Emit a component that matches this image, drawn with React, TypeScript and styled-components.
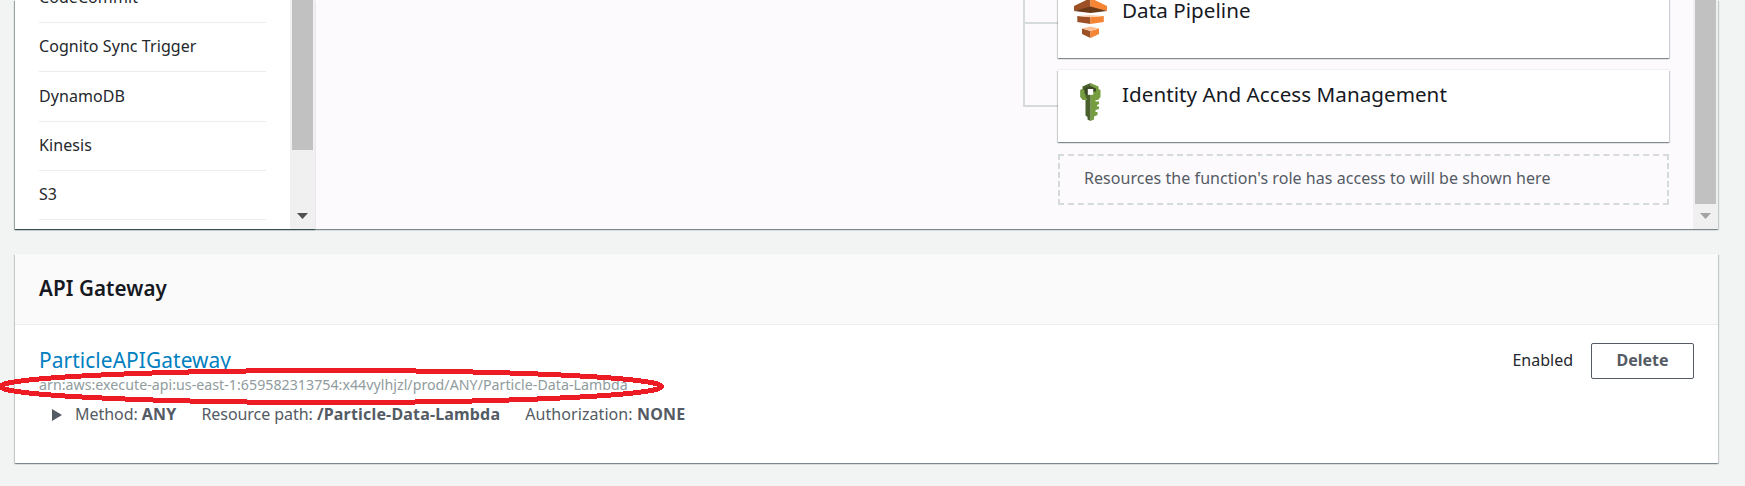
import React from 'react';
import styled, { createGlobalStyle } from 'styled-components';

const GlobalStyle = createGlobalStyle`
  *, *::before, *::after { box-sizing: border-box; }
  body {
    margin: 0;
    background: #f2f4f4;
    color: #16191f;
    font: 16px/22px "Noto Sans", "Open Sans", sans-serif;
    overflow: hidden;
  }
`;

const cardShadow =
  '0 -1px 0 0 #eff1f2, 0 1px 1px 0 rgba(0,28,36,.3), 1px 1px 1px 0 rgba(0,28,36,.15), -1px 1px 1px 0 rgba(0,28,36,.15)';

const Page = styled.main`
  display: flex;
  flex-direction: column;
  gap: 25px;
  height: 486px;
  padding: 0 27px 0 15px;
`;

const Designer = styled.section`
  display: flex;
  flex: none;
  height: 229px;
  background: #fcfafd;
  box-shadow: ${cardShadow};
`;

const TriggerPane = styled.aside`
  display: flex;
  width: 300px;
  background: #fff;
  box-shadow: 0 1px 1px 0 rgba(0,28,36,.45), -1px 1px 1px 0 rgba(0,28,36,.15);
`;

const TriggerList = styled.ul`
  display: flex;
  flex: 1;
  flex-direction: column;
  justify-content: flex-end;
  overflow: hidden;
  margin: 0;
  padding: 0 24px 9px;
  list-style: none;
`;

const Trigger = styled.li<{ $tall?: boolean }>`
  flex: none;
  height: ${(p) => (p.$tall ? 50 : 49)}px;
  padding-top: ${(p) => (p.$tall ? 13 : 12)}px;
  border-bottom: 1px solid #eaeded;
  color: #24272c;
  letter-spacing: 0.07px;
  white-space: nowrap;
`;

const Scrollbar = styled.div`
  display: flex;
  flex-direction: column;
  align-items: center;
  width: 25px;
  background: #f0f0f0;
`;

const Thumb = styled.div<{ $length: number }>`
  width: 21px;
  height: ${(p) => p.$length}px;
  background: #c1c1c1;
`;

const ScrollArrow = styled.svg`
  width: 11px;
  height: 6px;
  margin-top: auto;
  margin-bottom: 10px;
`;

const Canvas = styled.div`
  display: flex;
  flex: 1;
  justify-content: flex-end;
  height: 229px;
  padding-right: 24px;
  overflow: hidden;
`;

const Connector = styled.svg`
  flex: none;
  width: 35px;
  height: 108px;
`;

const Resources = styled.div`
  display: flex;
  flex-direction: column;
  justify-content: flex-end;
  gap: 12px;
  width: 611px;
  padding-bottom: 24px;
`;

const ResourceCard = styled.article`
  display: flex;
  flex: none;
  gap: 15px;
  height: 72px;
  padding: 12px 16px;
  background: #fff;
  box-shadow: ${cardShadow};
`;

const ResourceIcon = styled.svg`
  flex: none;
  width: 33px;
  height: 40px;
`;

const ResourceName = styled.h3`
  margin: 0;
  font-size: 20.6px;
  font-weight: 400;
  line-height: 25px;
  letter-spacing: 0.05px;
`;

const ResourceHint = styled.div`
  flex: none;
  height: 51px;
  padding: 11px 24px;
  border: 2px dashed #d5dbdb;
  color: #545b64;
  letter-spacing: 0.05px;
`;

const Panel = styled.section`
  flex: none;
  height: 209px;
  background: #fff;
  box-shadow: ${cardShadow};
`;

const PanelHeader = styled.header`
  height: 71px;
  padding: 21px 24px;
  background: #fafafa;
  border-bottom: 1px solid #eaeded;
`;

const PanelTitle = styled.h2`
  margin: 0;
  font-size: 20.6px;
  font-weight: 600;
  line-height: 26px;
  letter-spacing: 0.1px;
`;

const PanelBody = styled.div`
  display: flex;
  justify-content: space-between;
  padding: 18px 24px;
`;

const Endpoint = styled.div`
  display: flex;
  flex-direction: column;
  align-items: flex-start;
`;

const EndpointLink = styled.a`
  color: #0080c0;
  font-size: 20.9px;
  line-height: 34px;
  letter-spacing: 0.07px;
  text-decoration: none;
`;

const ArnRow = styled.div`
  position: relative;
  height: 18px;
`;

const Arn = styled.span`
  display: block;
  color: #8f9c9d;
  font-size: 14.2px;
  line-height: 16px;
  letter-spacing: 0.03px;
  white-space: nowrap;
`;

const Highlight = styled.svg`
  position: absolute;
  top: -12px;
  left: -39px;
  width: 666px;
  height: 44px;
`;

const Details = styled.div`
  display: flex;
  align-items: center;
  height: 22px;
  margin-top: 8px;
  padding-left: 13px;
  color: #545b64;
`;

const Caret = styled.svg`
  width: 10px;
  height: 12px;
  margin: 2px 13px 0 0;
`;

const Detail = styled.span`
  margin-right: 25px;
  letter-spacing: -0.05px;
  white-space: nowrap;

  b {
    letter-spacing: 0.17px;
  }

  &:last-child {
    letter-spacing: 0.08px;
  }
`;

const Actions = styled.div`
  display: flex;
  align-items: center;
  gap: 18px;
  height: 36px;
`;

const Status = styled.span`
  padding-bottom: 2px;
  color: #24272c;
`;

const Button = styled.button`
  width: 103px;
  height: 36px;
  padding: 0 0 2px;
  background: #fff;
  border: 1px solid #545b64;
  border-radius: 2px;
  color: #545b64;
  font: 700 16px/22px "Noto Sans", "Open Sans", sans-serif;
`;

const triggers = ['CodeCommit', 'Cognito Sync Trigger', 'DynamoDB', 'Kinesis', 'S3'];

const details = [
  { label: 'Method', value: 'ANY' },
  { label: 'Resource path', value: '/Particle-Data-Lambda' },
  { label: 'Authorization', value: 'NONE' },
];

function ScrollTrack({ length, arrow }: { length: number; arrow: string }) {
  return (
    <Scrollbar>
      <Thumb $length={length} />
      <ScrollArrow viewBox="0 0 11 6">
        <path d="M0 0h11L5.5 6z" fill={arrow} />
      </ScrollArrow>
    </Scrollbar>
  );
}

function PipelineIcon() {
  return (
    <ResourceIcon viewBox="0 0 33 40">
      <path d="M0 8 16.5 0v10L0 13z" fill="#9d5025" />
      <path d="M33 8 16.5 0v10L33 13z" fill="#f58534" />
      <path d="M0 13 16.5 8.500 33 13 16.5 15z" fill="#6b3a19" />
      <path d="M3.300 18 16.500 19V26L3.300 24z" fill="#9d5025" />
      <path d="M29.800 18 16.500 19V26l13.300-2z" fill="#f58534" />
      <path d="M3.300 18 16.500 17 29.800 18 16.500 19.200z" fill="#fbd0b0" />
      <path d="M8 30.500 16.500 33v7L8 36z" fill="#9d5025" />
      <path d="M25 30.500 16.500 33v7L25 36z" fill="#f58534" />
      <path d="M8 30.500 16.500 28.500 25 30.500 16.500 33z" fill="#fbbf93" />
    </ResourceIcon>
  );
}

function KeyIcon() {
  return (
    <ResourceIcon viewBox="0 0 33 40">
      <path
        d="M16.5 1 24.500 4.500V7L26.500 8v7L24 18h-2.500v1.500H25V22l-2 1v1.500h2V27l-3.500 1v2h2V33l-3.500 1.500v3L16.500 39z"
        fill="#759c3e"
      />
      <path d="M16.5 1 8.500 4.500V7L6.500 8v7L9 18h2.500v15.500l2 1.500v2.500l3 1.500z" fill="#4b612c" />
      <path d="M6.500 8 8.500 7 11.500 9v5.500l2 3.500H9l-2.500-3z" fill="#759c3e" />
      <path d="M10.500 6.500 16.500 4l5.500 2.500v3h-3V7h-5v6h-2l-1.500-2z" fill="#3c4929" />
      <path d="M13.800 7h5.400v5.800h-5.400z" fill="#fff" />
    </ResourceIcon>
  );
}

export default function App() {
  return (
    <Page>
      <GlobalStyle />
      <Designer>
        <TriggerPane>
          <TriggerList>
            {triggers.map((name) => (
              <Trigger key={name} $tall={name === 'DynamoDB'}>
                {name}
              </Trigger>
            ))}
          </TriggerList>
          <ScrollTrack length={150} arrow="#505050" />
        </TriggerPane>
        <Canvas>
          <Connector viewBox="0 0 35 108">
            <path d="M1 0V106H35M1 23H35" fill="none" stroke="#d5dbdb" strokeWidth="2" />
          </Connector>
          <Resources>
            <ResourceCard>
              <PipelineIcon />
              <ResourceName>Data Pipeline</ResourceName>
            </ResourceCard>
            <ResourceCard>
              <KeyIcon />
              <ResourceName>Identity And Access Management</ResourceName>
            </ResourceCard>
            <ResourceHint>Resources the function's role has access to will be shown here</ResourceHint>
          </Resources>
        </Canvas>
        <ScrollTrack length={204} arrow="#a3a3a3" />
      </Designer>
      <Panel>
        <PanelHeader>
          <PanelTitle>API Gateway</PanelTitle>
        </PanelHeader>
        <PanelBody>
          <Endpoint>
            <EndpointLink>ParticleAPIGateway</EndpointLink>
            <ArnRow>
              <Arn>arn:aws:execute-api:us-east-1:659582313754:x44vylhjzl/prod/ANY/Particle-Data-Lambda</Arn>
              <Highlight viewBox="0 0 666 44">
                <ellipse
                  cx="331"
                  cy="21.500"
                  rx="330.500"
                  ry="16"
                  fill="none"
                  stroke="#ed1c24"
                  strokeWidth="5"
                  shapeRendering="crispEdges"
                />
              </Highlight>
            </ArnRow>
            <Details>
              <Caret viewBox="0 0 10 12">
                <path d="M0 0 10 6 0 12z" fill="#545b64" />
              </Caret>
              {details.map((d) => (
                <Detail key={d.label}>
                  {d.label}: <b>{d.value}</b>
                </Detail>
              ))}
            </Details>
          </Endpoint>
          <Actions>
            <Status>Enabled</Status>
            <Button>Delete</Button>
          </Actions>
        </PanelBody>
      </Panel>
    </Page>
  );
}
